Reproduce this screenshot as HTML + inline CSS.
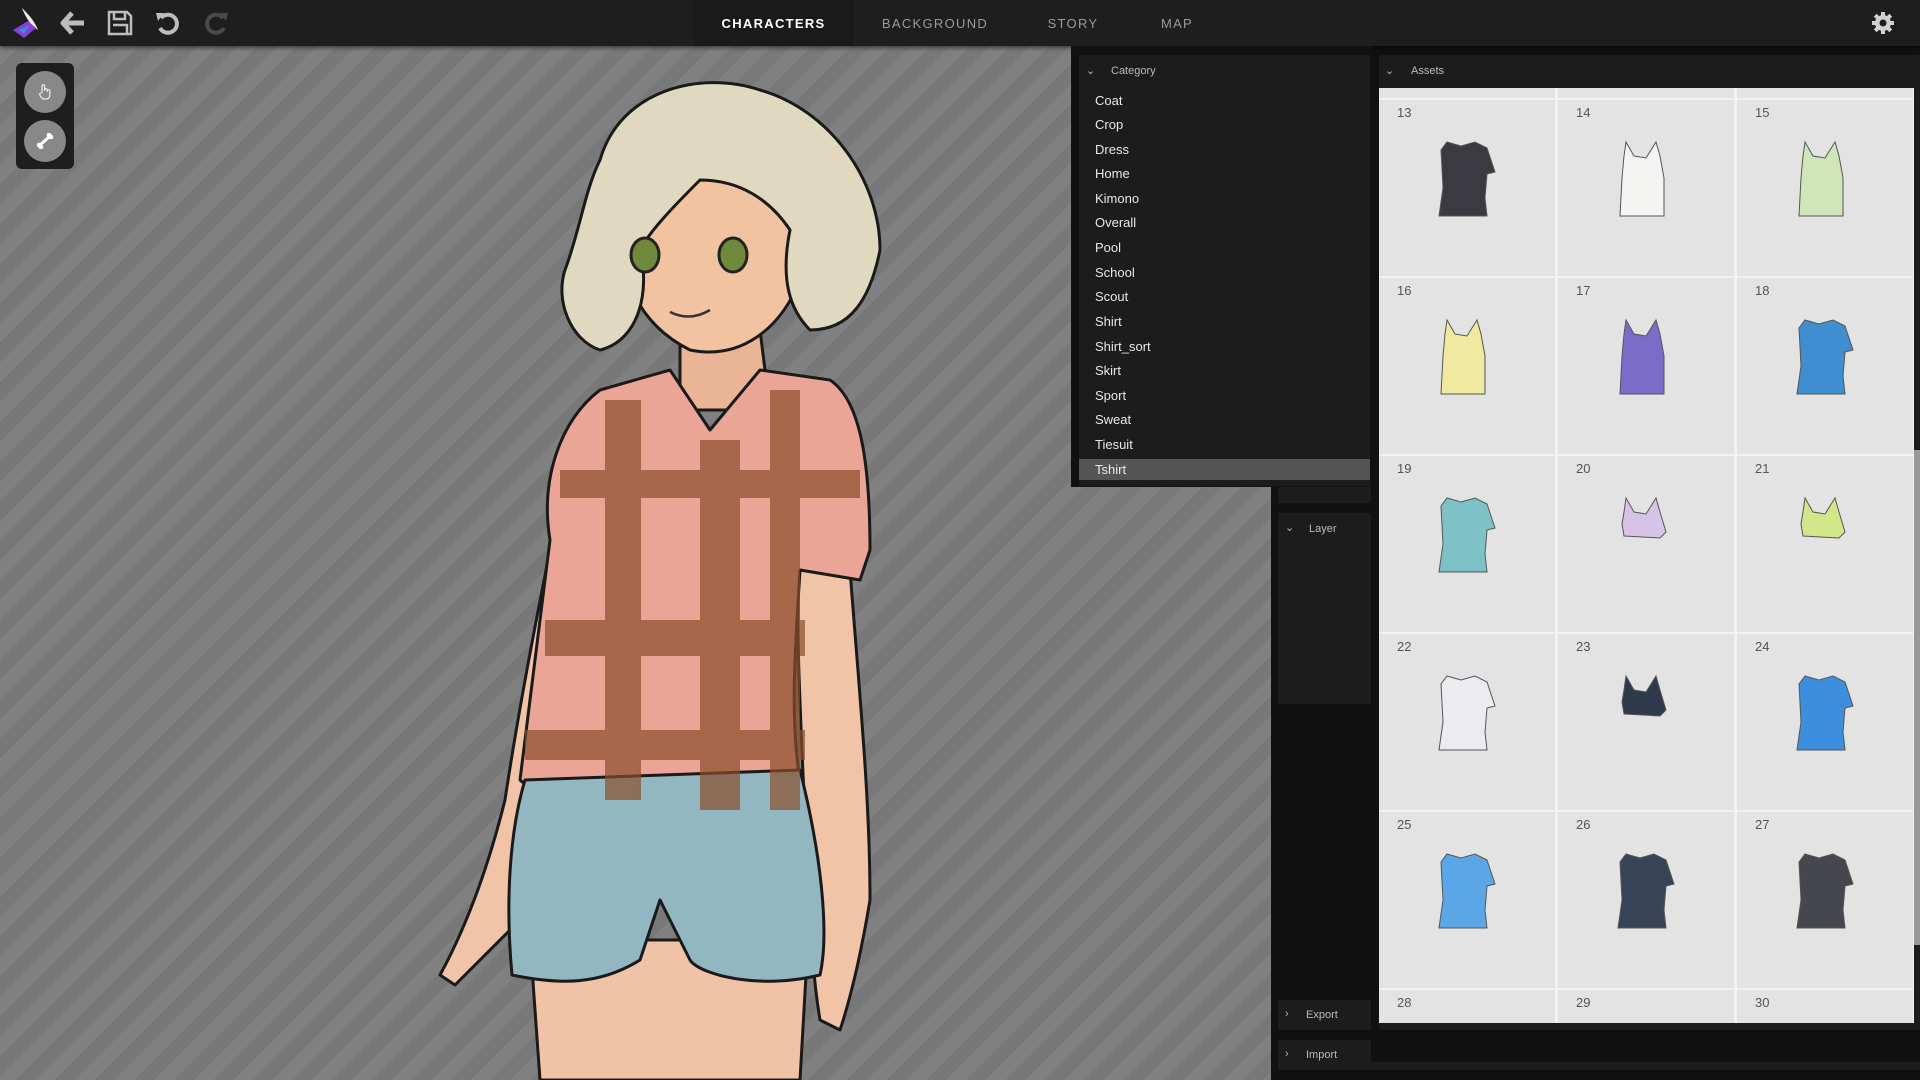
<!DOCTYPE html>
<html><head><meta charset="utf-8"><style>
*{margin:0;padding:0;box-sizing:border-box}
body{width:1920px;height:1080px;overflow:hidden;background:#111;font-family:"Liberation Sans",sans-serif;position:relative}
.abs{position:absolute}
#canvas{left:0;top:46px;width:1271px;height:1034px;background:#7c7c7c;background-image:repeating-linear-gradient(135deg,rgba(255,255,255,0.03) 0 14px,rgba(0,0,0,0.03) 14px 28px)}
#top{left:0;top:0;width:1920px;height:46px;background:#1e1e1e;box-shadow:0 2px 4px rgba(0,0,0,.5)}
.tab{position:absolute;top:0;height:46px;line-height:47px;font-size:13px;letter-spacing:1.3px;color:#9a9a9a;text-align:center}
.cat{position:absolute;left:1095px;font-size:13px;color:#e8e8e8}
.cell{position:absolute;width:176px;height:176px;background:#e3e3e3}
.cell span{position:absolute;left:18px;top:5px;font-size:13px;color:#555}
.cell svg{position:absolute;left:48px;top:38px}
.hdr{font-size:11px;color:#bbb}
</style></head><body>
<div id="canvas" class="abs"></div>
<div id="top" class="abs">
 <svg class="abs" style="left:8px;top:4px" width="36" height="38" viewBox="0 0 36 38">
  <path d="M14 4 C20 10 26 16 30 26 L24 22 C20 16 16 10 14 4Z" fill="#eee"/>
  <path d="M5 26 L20 17 L28 24 L16 34Z" fill="#8a3bd8"/>
  <path d="M10 26 L22 21 L16 30Z" fill="#3a8ad8"/>
  <path d="M8 30 L20 34 L26 36 L14 32Z" fill="#111"/>
 </svg>
 <svg class="abs" style="left:60px;top:11px" width="26" height="24" viewBox="0 0 26 24"><path d="M12 2 L3 12 L12 22 M3 12 H24" stroke="#bdbdbd" stroke-width="5" fill="none" stroke-linejoin="round"/></svg>
 <svg class="abs" style="left:107px;top:10px" width="26" height="26" viewBox="0 0 26 26"><path d="M2 2 H20 L24 6 V24 H2Z M7 2 V9 H18 V2 M6 15 H20 V24" stroke="#bdbdbd" stroke-width="2.5" fill="none"/></svg>
 <svg class="abs" style="left:154px;top:9px" width="28" height="28" viewBox="0 0 28 28"><path d="M7 9 A9 9 0 1 1 6 19" stroke="#bdbdbd" stroke-width="4" fill="none"/><path d="M2 4 L10 4 L4 12Z" fill="#bdbdbd"/></svg>
 <svg class="abs" style="left:202px;top:9px" width="28" height="28" viewBox="0 0 28 28"><path d="M21 9 A9 9 0 1 0 22 19" stroke="#4a4a4a" stroke-width="4" fill="none"/><path d="M26 4 L18 4 L24 12Z" fill="#4a4a4a"/></svg>
 <div class="abs" style="left:694px;top:0;width:159px;height:46px;background:#1a1a1a"></div>
 <div class="tab" style="left:694px;width:159px;color:#fff;font-weight:bold">CHARACTERS</div>
 <div class="tab" style="left:870px;width:130px">BACKGROUND</div>
 <div class="tab" style="left:1030px;width:86px">STORY</div>
 <div class="tab" style="left:1140px;width:74px">MAP</div>
 <svg class="abs" style="left:1871px;top:11px" width="24" height="24" viewBox="0 0 24 24"><g fill="#d0d0d0"><circle cx="12" cy="12" r="8"/><rect x="10" y="1" width="4" height="22"/><rect x="1" y="10" width="22" height="4"/><rect x="10" y="1" width="4" height="22" transform="rotate(45 12 12)"/><rect x="10" y="1" width="4" height="22" transform="rotate(-45 12 12)"/></g><circle cx="12" cy="12" r="3.5" fill="#1e1e1e"/></svg>
</div>
<!-- toolbox -->
<div class="abs" style="left:16px;top:63px;width:58px;height:106px;background:#1e1e1e;border-radius:6px"></div>
<div class="abs" style="left:24px;top:71px;width:42px;height:42px;border-radius:50%;background:#888"></div>
<div class="abs" style="left:24px;top:120px;width:42px;height:42px;border-radius:50%;background:#888"></div>
<svg class="abs" style="left:38px;top:84px" width="14" height="16" viewBox="0 0 14 16"><path d="M4 9 V2 a1.3 1.3 0 0 1 2.6 0 V7 M6.6 6 a1.3 1.3 0 0 1 2.6 0 V8 M9.2 7 a1.3 1.3 0 0 1 2.6 0 V11 C11.8 14 10 15 8 15 H6 C4 15 2 12 1.5 10 L3.5 9" stroke="#eee" stroke-width="1.2" fill="none"/></svg>
<svg class="abs" style="left:36px;top:133px" width="18" height="16" viewBox="0 0 18 16"><path d="M4 12 L13 4" stroke="#fff" stroke-width="3"/><circle cx="3" cy="12" r="2.3" fill="#fff"/><circle cx="5" cy="14" r="2.3" fill="#fff"/><circle cx="13" cy="2" r="2.3" fill="#fff"/><circle cx="15" cy="4" r="2.3" fill="#fff"/></svg>

<!-- character -->
<svg class="abs" style="left:0;top:46px" width="1271" height="1034" viewBox="0 46 1271 1034">
 <g stroke="#1a1a1a" stroke-width="3" stroke-linejoin="round">
  <path d="M530 940 L540 1080 L800 1080 L808 940Z" fill="#f0c3a6"/>
  <path d="M560 500 C540 600 520 700 505 800 C490 860 470 920 440 975 L455 985 C480 960 500 940 520 920 L560 800 C580 700 590 600 590 520Z" fill="#f1c4a7"/>
  <path d="M800 560 L850 570 C860 700 870 800 870 900 C860 960 850 1000 840 1030 L820 1020 C810 960 810 900 805 820 C800 700 795 620 800 560Z" fill="#f1c4a7"/>
  <path d="M680 330 L760 330 L770 410 L680 410Z" fill="#eab496"/>
  <path d="M600 390 L670 370 L710 430 L760 370 L830 380 C860 400 870 460 870 550 L860 580 L800 570 C795 650 790 720 800 780 L640 815 C600 800 540 800 520 780 C530 700 540 620 550 540 C540 480 560 420 600 390Z" fill="#eaa597"/>
  <path d="M525 780 L800 770 C820 850 830 930 820 975 C760 990 700 975 690 960 L660 900 L640 960 C600 985 560 985 512 975 C505 900 510 830 525 780Z" fill="#93b7c1"/>
 </g>
 <g fill="#8a4e2c" opacity="0.7">
  <rect x="560" y="470" width="300" height="28"/>
  <rect x="545" y="620" width="260" height="36"/>
  <rect x="525" y="730" width="280" height="30"/>
  <rect x="605" y="400" width="36" height="400"/>
  <rect x="700" y="440" width="40" height="370"/>
  <rect x="770" y="390" width="30" height="420"/>
 </g>
 <path d="M620 170 C610 260 630 320 690 350 C740 360 780 330 800 280 L810 180Z" fill="#f2c3a0" stroke="#1a1a1a" stroke-width="3"/>
 <path d="M600 160 C620 90 700 70 760 90 C830 110 880 180 880 250 C870 300 850 330 810 330 C790 310 780 280 790 230 C770 200 740 180 700 180 C680 200 650 230 640 250 C650 290 640 340 600 350 C570 340 555 300 565 270 C580 230 585 190 600 160Z" fill="#e1d9bf" stroke="#1a1a1a" stroke-width="3"/>
 <ellipse cx="645" cy="255" rx="14" ry="17" fill="#6f8a3c" stroke="#222" stroke-width="3"/>
 <ellipse cx="733" cy="255" rx="14" ry="17" fill="#6f8a3c" stroke="#222" stroke-width="3"/>
 <path d="M670 312 Q690 322 710 310" stroke="#333" stroke-width="2.5" fill="none"/>
</svg>

<!-- category panel -->
<div class="abs" style="left:1071px;top:46px;width:300px;height:441px;background:#111"></div>
<div class="abs" style="left:1079px;top:55px;width:291px;height:431px;background:#1c1c1c"></div>
<div class="abs hdr" style="left:1086px;top:64px">⌄</div>
<div class="abs hdr" style="left:1111px;top:65px">Category</div>
<div class="abs" style="left:1079px;top:459px;width:291px;height:21px;background:#555"></div>
<div class="cat" style="top:93px">Coat</div>
<div class="cat" style="top:117px">Crop</div>
<div class="cat" style="top:142px">Dress</div>
<div class="cat" style="top:166px">Home</div>
<div class="cat" style="top:191px">Kimono</div>
<div class="cat" style="top:215px">Overall</div>
<div class="cat" style="top:240px">Pool</div>
<div class="cat" style="top:265px">School</div>
<div class="cat" style="top:289px">Scout</div>
<div class="cat" style="top:314px">Shirt</div>
<div class="cat" style="top:339px">Shirt_sort</div>
<div class="cat" style="top:363px">Skirt</div>
<div class="cat" style="top:388px">Sport</div>
<div class="cat" style="top:412px">Sweat</div>
<div class="cat" style="top:437px">Tiesuit</div>
<div class="cat" style="top:462px">Tshirt</div>

<div class="abs" style="left:1278px;top:487px;width:93px;height:16px;background:#1c1c1c"></div>
<div class="abs" style="left:1278px;top:513px;width:93px;height:191px;background:#1c1c1c"></div>
<div class="abs hdr" style="left:1285px;top:521px">⌄</div>
<div class="abs hdr" style="left:1309px;top:523px">Layer</div>
<div class="abs" style="left:1278px;top:1000px;width:93px;height:30px;background:#1c1c1c"></div>
<div class="abs hdr" style="left:1285px;top:1008px">›</div>
<div class="abs hdr" style="left:1306px;top:1009px">Export</div>
<div class="abs" style="left:1278px;top:1040px;width:93px;height:30px;background:#1c1c1c"></div>
<div class="abs hdr" style="left:1285px;top:1048px">›</div>
<div class="abs hdr" style="left:1306px;top:1049px">Import</div>
<div class="abs" style="left:1371px;top:1062px;width:549px;height:8px;background:#1c1c1c"></div>

<div class="abs" style="left:1379px;top:55px;width:541px;height:975px;background:#1c1c1c"></div>
<div class="abs hdr" style="left:1385px;top:64px">⌄</div>
<div class="abs hdr" style="left:1411px;top:65px">Assets</div>
<div class="abs" style="left:1379px;top:88px;width:535px;height:935px;background:#f2f2f2"></div>
<div class="abs" style="left:1914px;top:450px;width:6px;height:495px;background:#999"></div>
<div id="grid"></div>
<script>
var cols=[1379,1558,1737],rows=[100,278,456,634,812,990];
var fills=[["#3a3a40","t"],["#f4f4f2","k"],["#cfe6b8","k"],["#f0eaa0","k"],["#7a6cc8","k"],["#3f8fd0","t"],["#7ec2c8","t"],["#d8c3e8","c"],["#d2e68a","c"],["#ececf0","t"],["#2e3a4a","c"],["#3d8fde","t"],["#5aa6e6","t"],["#374458","t"],["#46464e","t"]];
var paths={t:"M20 4 L34 8 L48 4 L60 10 L68 34 L60 36 L58 60 L60 78 L12 78 L16 50 L14 12Z",k:"M20 4 L28 18 L40 20 L50 4 L54 18 L58 40 L58 78 L14 78 L16 40 L18 18Z",c:"M20 4 L28 18 L40 20 L50 4 L54 18 L60 38 L54 44 L18 42 L16 30 L18 18Z"};
var h="";
cols.forEach(function(x){h+='<div class="cell" style="left:'+x+'px;top:88px;height:10px"></div>';});
for(var r=0;r<6;r++)for(var c=0;c<3;c++){var n=13+r*3+c;var i=r*3+c;var st=r==5?'height:33px;':'';
h+='<div class="cell" style="left:'+cols[c]+'px;top:'+rows[r]+'px;'+st+'"><span>'+n+'</span>';
if(i<15)h+='<svg width="80" height="82" viewBox="0 0 80 82"><path d="'+paths[fills[i][1]]+'" fill="'+fills[i][0]+'" stroke="#555" stroke-width="1"/></svg>';
h+='</div>';}
document.getElementById('grid').innerHTML=h;
</script>
</body></html>
